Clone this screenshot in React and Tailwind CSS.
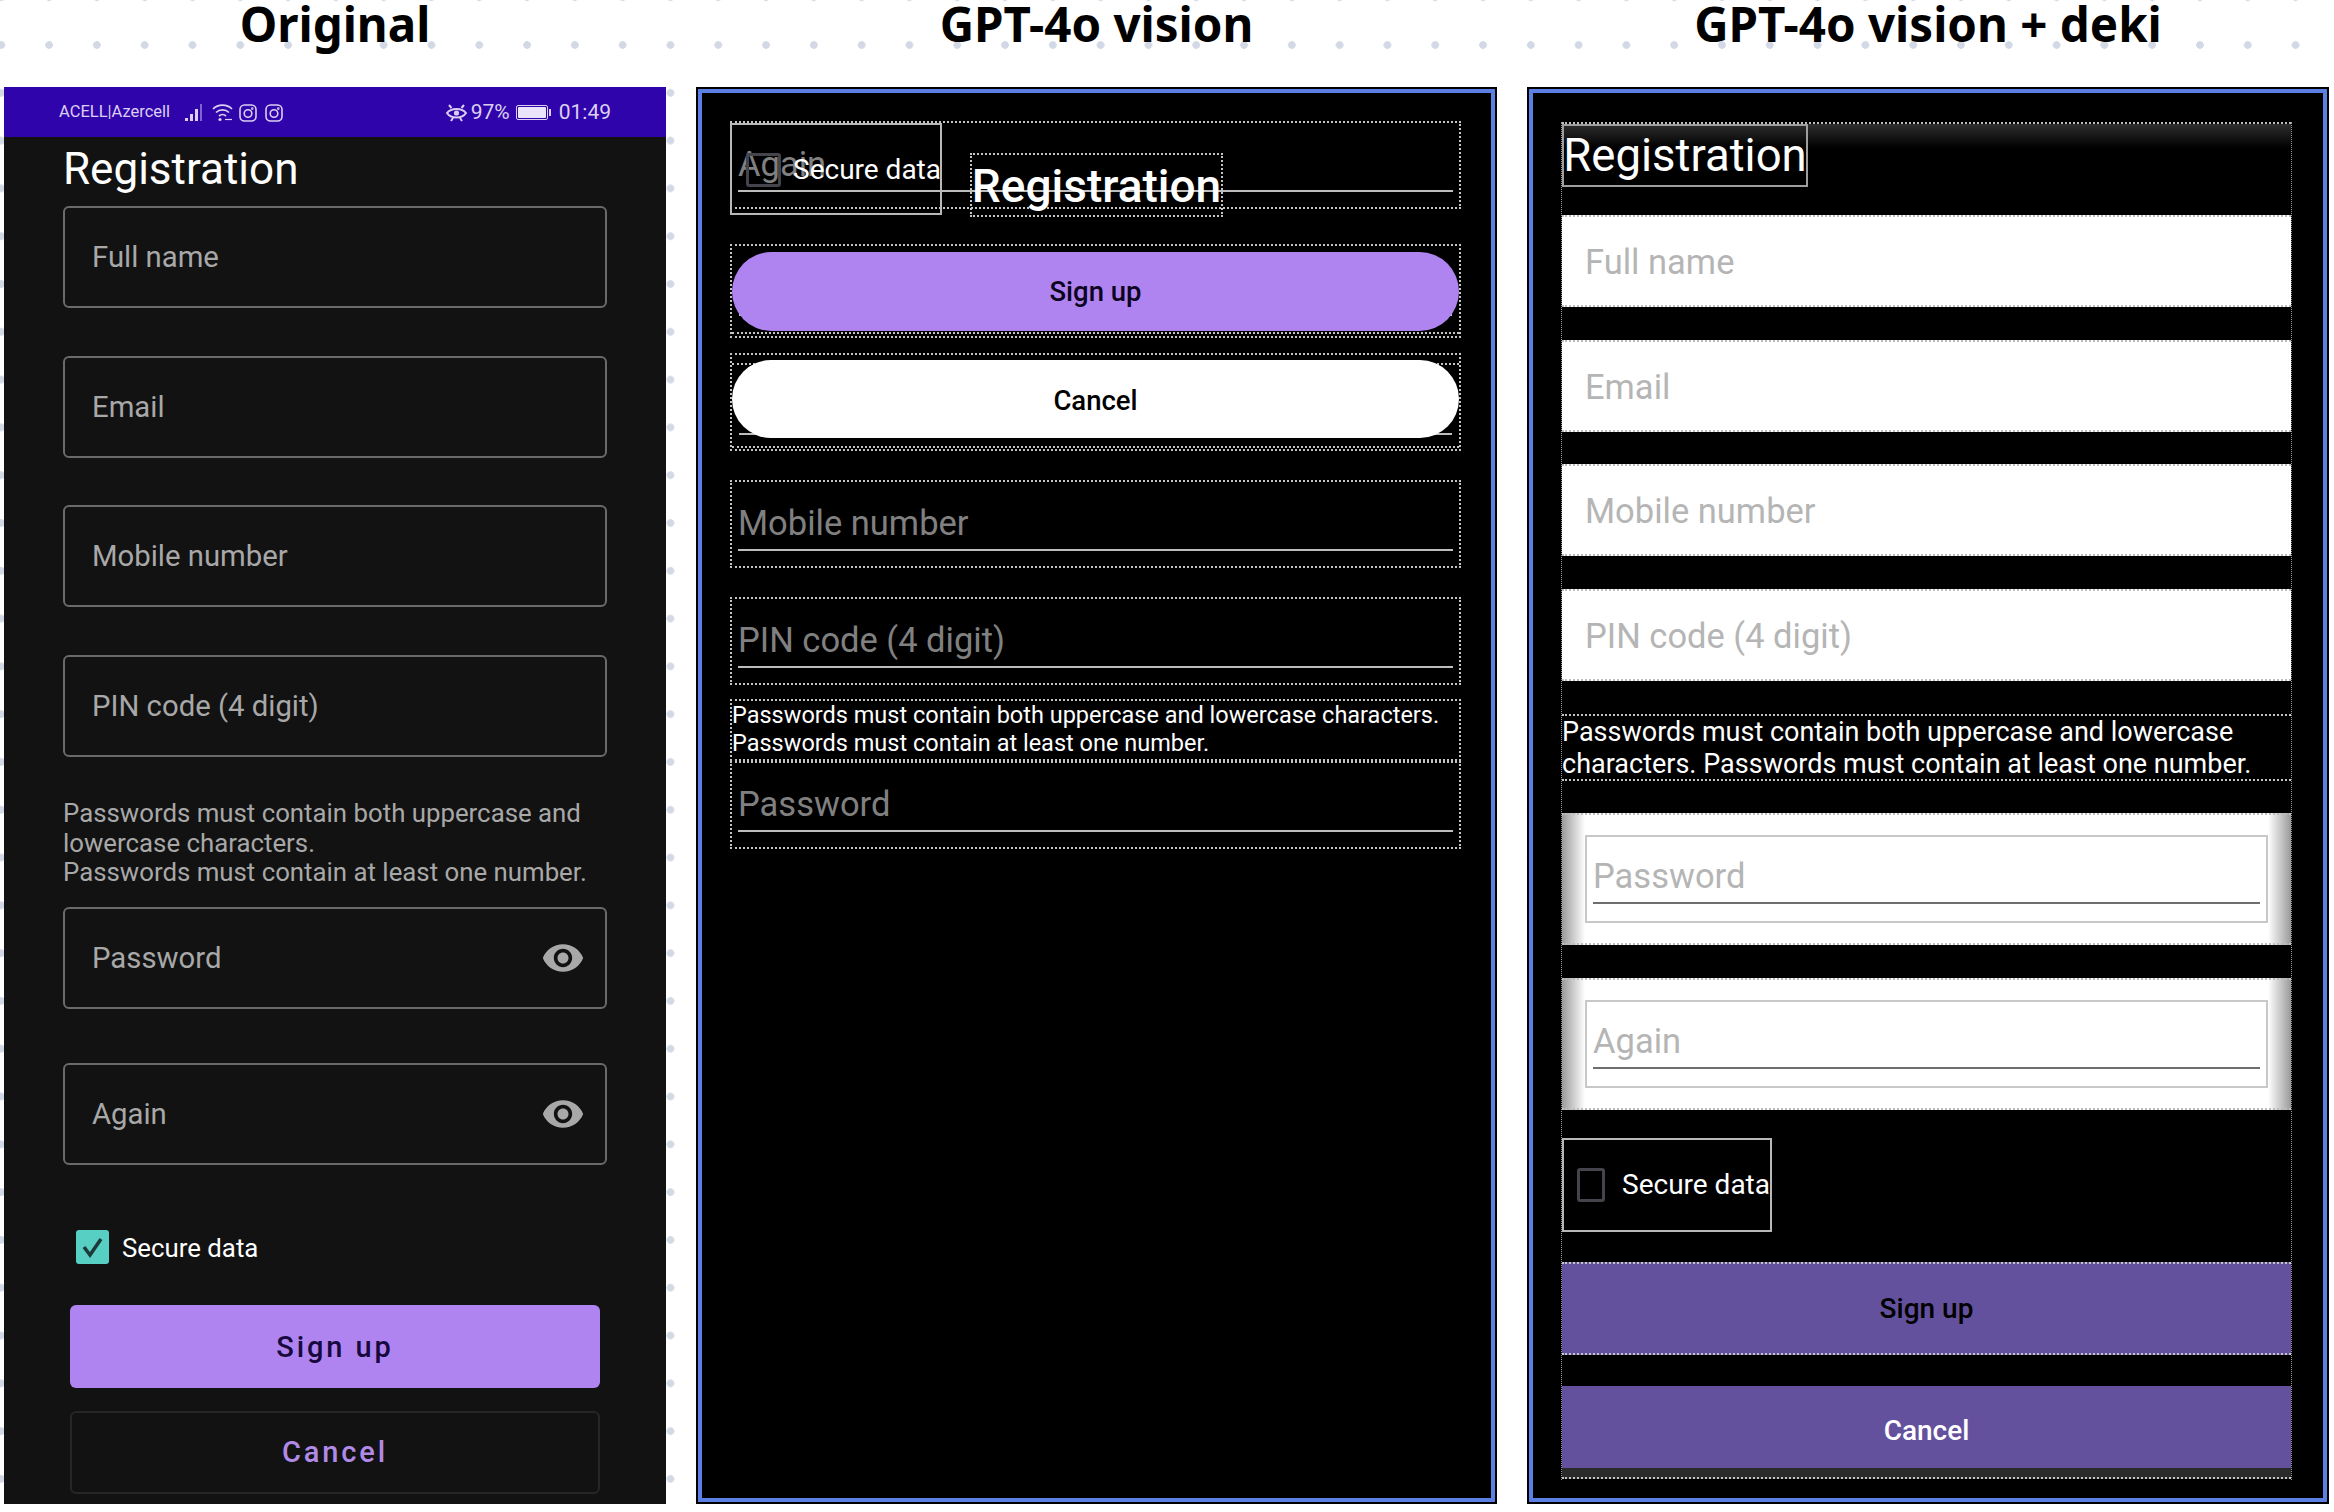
import React from "react";
import { MdVisibility } from "react-icons/md";

const dashed = "border-2 border-dotted border-[#c4c4c4]";

const Title = ({ children }) => (
  <div className="h-[87px] flex justify-center">
    <h1 className="font-['Noto_Sans',sans-serif] font-bold text-[47.5px] leading-[48px] text-black">
      {children}
    </h1>
  </div>
);

const InstaIcon = () => (
  <svg width="18" height="18" viewBox="0 0 18 18" fill="none" stroke="#dccff2" strokeWidth="1.6">
    <rect x="1" y="1" width="16" height="16" rx="4.5" />
    <circle cx="9" cy="9.5" r="3.8" />
    <circle cx="13.3" cy="4.6" r="0.5" />
  </svg>
);

const StatusBar = () => (
  <div className="h-[50px] pt-px bg-[#2f05ab] flex items-center justify-between pl-[55px] pr-[55px] text-[#dccff2]">
    <div className="flex items-center">
      <span className="text-[16.5px] w-[126px] whitespace-nowrap">ACELL|Azercell</span>
      <svg width="20" height="18" viewBox="0 0 20 18" fill="#dccff2">
        <rect x="0" y="14" width="3" height="3" />
        <rect x="5" y="10" width="3" height="7" />
        <rect x="10" y="5" width="3" height="12" />
        <rect x="15" y="0" width="2" height="17" fill="#7f63cf" />
      </svg>
      <svg className="ml-[7px]" width="21" height="19" viewBox="0 0 21 19" fill="none" stroke="#dccff2" strokeWidth="1.7">
        <path d="M1 6 C6 0.8 15 0.8 20 6" />
        <path d="M4 9.5 C7.5 6 13.5 6 17 9.5" />
        <path d="M7 13 C9 11.2 12 11.2 14 13" />
        <circle cx="8" cy="16.5" r="1.6" fill="#dccff2" stroke="none" />
        <path d="M13 16.5 h7" strokeWidth="1.2" />
      </svg>
      <span className="ml-[6px]"><InstaIcon /></span>
      <span className="ml-[8px]"><InstaIcon /></span>
    </div>
    <div className="flex items-center">
      <svg width="23" height="18" viewBox="0 0 23 18" fill="none" stroke="#dccff2" strokeWidth="2">
        <path d="M2 9 C6 3.5 17 3.5 21 9 C17 15 6 15 2 9 Z" />
        <circle cx="11.5" cy="9" r="2.6" fill="#dccff2" stroke="none" />
        <path d="M4 1 L6.5 4 M19 1 L16.5 4 M6 17 L8 14 M17 17 L15 14" />
      </svg>
      <span className="ml-[3px] text-[21px]">97%</span>
      <div className="ml-[6px] w-[32px] h-[15px] rounded-[2px] border border-[#dccff2] p-px">
        <div className="w-full h-full bg-[#ebe3fa] rounded-[1px]" />
      </div>
      <div className="ml-px w-[2px] h-[7px] bg-[#dccff2]" />
      <span className="ml-[8px] text-[21px]">01:49</span>
    </div>
  </div>
);

const OutlinedField = ({ label, eye, className }) => (
  <div className={"h-[102px] w-[544px] rounded-[6px] border-2 border-[#6a6a6a] flex items-center justify-between pl-[27px] pr-[20px] " + className}>
    <span className="pt-[2px] text-[29.3px] text-[#a8a8a8]">{label}</span>
    {eye && <MdVisibility className="text-[#a8a8a8]" size={44} />}
  </div>
);

const CheckedBox = () => (
  <div className="w-[33px] h-[34px] rounded-[3px] bg-[#57cfc3] flex items-center justify-center">
    <svg width="25" height="24" viewBox="0 0 25 24" fill="none" stroke="#1d3a38" strokeWidth="3.5">
      <path d="M4 12 L10 20 L21 4" />
    </svg>
  </div>
);

const Original = () => (
  <div className="h-[1417px] bg-[#121212] flex flex-col">
    <StatusBar />
    <div className="pl-[59px] h-[69px] pb-[5px] flex items-center">
      <h2 className="text-[44px] text-white leading-none">Registration</h2>
    </div>
    <div className="pl-[59px] flex flex-col">
      <OutlinedField label="Full name" />
      <OutlinedField label="Email" className="mt-[48px]" />
      <OutlinedField label="Mobile number" className="mt-[47px]" />
      <OutlinedField label="PIN code (4 digit)" className="mt-[48px]" />
      <p className="h-[150px] pt-[42px] text-[25.8px] leading-[29.5px] text-[#a8a8a8] w-[545px]">
        Passwords must contain both uppercase and lowercase characters.
        <br />
        Passwords must contain at least one number.
      </p>
      <OutlinedField label="Password" eye />
      <OutlinedField label="Again" eye className="mt-[54px]" />
      <div className="mt-[62px] ml-[13px] flex items-center gap-[13px]">
        <CheckedBox />
        <span className="pt-[2px] text-[25.8px] text-white">Secure data</span>
      </div>
    </div>
    <div className="pl-[66px] flex flex-col">
      <button className="mt-[37px] pt-[3px] w-[530px] h-[83px] rounded-[6px] bg-[#b084f0] text-[#17093f] text-[29px] font-medium tracking-[0.1em]">
        Sign up
      </button>
      <button className="mt-[23px] pt-[2px] w-[530px] h-[83px] rounded-[6px] border-2 border-[#262626] text-[#b18ae8] text-[29px] font-medium tracking-[0.1em]">
        Cancel
      </button>
    </div>
  </div>
);

const UnderlineBox = ({ label, className }) => (
  <div className={"h-[88px] px-[6px] flex flex-col justify-end pb-[15px] " + dashed + " " + className}>
    <span className="text-[34.5px] leading-[46px] mb-[3px] text-[#808080]">{label}</span>
    <div className="h-[2px] bg-[#bdbdbd]" />
  </div>
);

const VisionOnly = () => (
  <div className="h-full border-2 border-black">
    <div className="h-full border-4 border-[#5b7fe3] bg-black pt-[28px] pl-[28px] pr-[30px] flex flex-col">
      <div className="relative">
        <UnderlineBox label="Again" />
        <div className="absolute left-0 top-[2px] w-[212px] h-[92px] border-2 border-[#b8b8b8]">
          <div className="absolute left-[14px] top-[28px] w-[35px] h-[34px] rounded-[3px] border-[3px] border-[#44444d]" />
          <span className="absolute left-[61px] top-[29px] text-[28px] leading-[32px] text-white whitespace-nowrap">Secure data</span>
        </div>
        <div className={"absolute left-[240px] top-[32px] w-[253px] h-[64px] pt-[2px] flex items-center justify-center " + dashed}>
          <span className="text-[46px] font-medium text-white leading-none">Registration</span>
        </div>
      </div>
      <div className={"relative mt-[35px] h-[94px] pt-[6px] " + dashed}>
        <div className="absolute inset-x-[7px] top-[68px] h-[2px] bg-[#bdbdbd]" />
        <div className="relative h-[79px] rounded-full bg-[#b084f0] flex items-center justify-center">
          <span className="text-[27.5px] font-medium text-[#0c0420]">Sign up</span>
        </div>
        <div className="mt-px border-t-2 border-dotted border-[#c4c4c4]" />
      </div>
      <div className={"relative mt-[15px] h-[98px] pt-[5px] " + dashed}>
        <div className="absolute inset-x-0 top-[8px] border-t-2 border-dotted border-[#c4c4c4]" />
        <div className="absolute inset-x-[7px] top-[78px] h-[2px] bg-[#bdbdbd]" />
        <div className="absolute inset-x-0 top-[91px] border-t-2 border-dotted border-[#c4c4c4]" />
        <div className="relative h-[78px] pt-[3px] rounded-full bg-white flex items-center justify-center">
          <span className="text-[27.5px] font-medium text-black">Cancel</span>
        </div>
      </div>
      <UnderlineBox label="Mobile number" className="mt-[29px]" />
      <UnderlineBox label="PIN code (4 digit)" className="mt-[29px]" />
      <div className={"mt-[14px] h-[62px] leading-[28px] text-[23.5px] text-white whitespace-nowrap " + dashed}>
        Passwords must contain both uppercase and lowercase characters.
        <br />
        Passwords must contain at least one number.
      </div>
      <UnderlineBox label="Password" />
    </div>
  </div>
);

const WhiteField = ({ label, className }) => (
  <div className={"h-[92px] bg-white flex items-center pt-[3px] pl-[23px] border-y-2 border-dotted border-[#bdbdbd] " + className}>
    <span className="text-[34.5px] text-[#b5b5b5]">{label}</span>
  </div>
);

const GradientField = ({ label, className }) => (
  <div className={"h-[132px] px-[23px] pt-[20px] flex-none border-y-2 border-dotted border-[#bdbdbd] bg-[linear-gradient(90deg,#9a9a9a,#ffffff_23px,#ffffff_calc(100%-23px),#9a9a9a)] " + className}>
    <div className="h-[88px] bg-white border-2 border-[#c8c8c8] px-[6px] flex flex-col justify-end pb-[17px]">
      <span className="text-[34.5px] leading-[46px] mb-[3px] text-[#b5b5b5]">{label}</span>
      <div className="h-[2px] bg-[#6e6e6e]" />
    </div>
  </div>
);

const VisionDeki = () => (
  <div className="h-full border-2 border-black">
    <div className="h-full border-4 border-[#5b7fe3] bg-black pt-[29px] pl-[28px] pr-[31px] flex flex-col">
      <div className="h-[1358px] border-x border-dotted border-[#9a9a9a] flex flex-col">
        <div className="h-[93px] border-t-2 border-dotted border-[#bdbdbd] bg-[linear-gradient(180deg,#2e2e2e,#000000_24px)]">
          <div className="w-[246px] h-[63px] border-2 border-[#9e9e9e] flex items-center justify-center">
            <span className="text-[45.5px] text-white leading-none">Registration</span>
          </div>
        </div>
        <WhiteField label="Full name" />
        <WhiteField label="Email" className="mt-[33px]" />
        <WhiteField label="Mobile number" className="mt-[32px]" />
        <WhiteField label="PIN code (4 digit)" className="mt-[33px]" />
        <p className={"mt-[33px] h-[67px] text-[27px] leading-[32px] text-white border-y-2 border-dotted border-[#c4c4c4]"}>
          Passwords must contain both uppercase and lowercase characters. Passwords must contain at least one number.
        </p>
        <GradientField label="Password" className="mt-[32px]" />
        <GradientField label="Again" className="mt-[33px]" />
        <div className="mt-[28px] w-[210px] h-[94px] border-2 border-[#b8b8b8] pl-[13px] flex items-center gap-[17px]">
          <div className="w-[35px] h-[34px] rounded-[3px] border-[3px] border-[#44444d]" />
          <span className="text-[28px] text-white whitespace-nowrap">Secure data</span>
        </div>
        <button className="mt-[30px] h-[93px] bg-[#63519e] text-black text-[28px] font-medium border-y-2 border-dotted border-[#c4c4c4]">
          Sign up
        </button>
        <div className="mt-[31px] h-[93px] border-b-2 border-dotted border-[#c4c4c4] bg-[#2a2a2a]">
          <button className="w-full h-[82px] pt-[8px] bg-[#63519e] text-white text-[28px] font-medium">
            Cancel
          </button>
        </div>
      </div>
    </div>
  </div>
);

const App = () => {
  return (
    <div className="w-[2334px] h-[1512px] overflow-hidden flex bg-white bg-[radial-gradient(circle,#d3d9e4_3.5px,transparent_4px)] bg-[size:47.8px_47.8px] bg-[position:-22.6px_21.1px] font-['Roboto',sans-serif]">
      <div className="ml-[4px] w-[662px] flex-none">
        <Title>Original</Title>
        <Original />
      </div>
      <div className="ml-[30px] w-[801px] flex-none">
        <Title>GPT-4o vision</Title>
        <div className="h-[1417px]">
          <VisionOnly />
        </div>
      </div>
      <div className="ml-[30px] w-[802px] flex-none">
        <Title>GPT-4o vision + deki</Title>
        <div className="h-[1417px]">
          <VisionDeki />
        </div>
      </div>
    </div>
  );
};

export default App;
